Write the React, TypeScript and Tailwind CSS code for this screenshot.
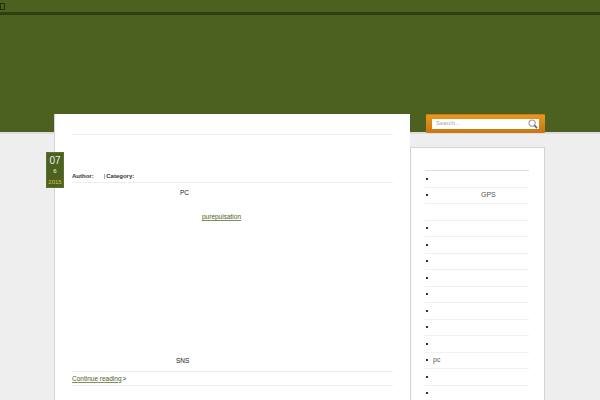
const items = [
  { t: "", b: true },
  { t: "GPS", b: true, c: true },
  { t: "", b: false },
  ...Array.from({ length: 8 }, () => ({ t: "", b: true })),
  { t: "pc", b: true },
  { t: "", b: true },
  { t: "", b: true },
];

function Search() {
  return (
    <svg width="10" height="10" viewBox="0 0 11 11" fill="none" className="shrink-0">
      <circle cx="4.5" cy="4.5" r="3.4" stroke="#999" strokeWidth="1.2" />
      <path d="M7 7l3 3" stroke="#666" strokeWidth="1.8" />
    </svg>
  );
}

export default function App() {
  return (
    <div className="relative h-[400px] w-[600px] overflow-hidden bg-[#eeeeee] font-['Liberation_Sans',sans-serif] text-[6.5px] text-[#333]">
      <header className="h-[134px] border-b-2 border-[#dcdcdc] bg-[#4c6120]">
        <div className="h-[15px] border-b-[3px] border-[#2f3f12] pt-[3px]">
          <div className="h-[7px] w-[5px] border border-[#22300a]" />
        </div>
      </header>
      <div className="absolute left-[54px] right-[55px] top-[114px] flex items-start justify-between">
        <main className="h-[286px] w-[356px] border-l border-[#d4d4d4] bg-white px-[17px]">
          <div className="mt-[20px] h-px bg-[#eee]" />
          <div className="mt-[37px] flex h-[11px] items-center border-b border-[#eee] pb-[1px] text-[6px] font-bold">
            <span>Author:</span><span className="ml-[10px] font-normal">|</span><span className="ml-[1px]">Category:</span>
          </div>
          <p className="ml-[108px] mt-[5px] leading-[9px] text-[#222]">PC</p>
          <a className="ml-[130px] mt-[15px] block leading-[9px] text-[#4c6120] underline decoration-[#7f8f5f]">purepulsation</a>
          <p className="ml-[104px] mt-[135px] leading-[9px] text-[#222]">SNS</p>
          <div className="mt-[6px] flex h-[15px] items-center border-y border-[#eee]">
            <a className="text-[#4c6120] underline decoration-[#7f8f5f]">Continue reading</a><span className="ml-[1px]">&gt;</span>
          </div>
        </main>
        <aside className="flex w-[135px] flex-col">
          <div className="ml-[16px] flex h-[19px] items-center rounded-[1px] border-y border-[#c77c18] bg-gradient-to-b from-[#e8981f] to-[#c9770f] px-[6px]">
            <div className="flex h-[10px] w-full items-center justify-between bg-white pl-[4px] pr-[1px] text-[6px] text-[#aaa]">
              <span>Search...</span><Search />
            </div>
          </div>
          <div className="mt-[14px] h-[260px] border border-[#d4d4d4] bg-white pl-[14px] pr-[15px] pt-[22px]">
            <ul className="border-t border-[#ddd]">
              {items.map((it, i) => (
                <li key={i} className="flex h-[16.5px] items-center border-b border-[#f0f0f0] text-[7px] text-[#555]">
                  {it.b && <span className="ml-[1px] h-[2px] w-[2px] shrink-0 bg-[#333]" />}
                  <span className={it.c ? "ml-[53px]" : "ml-[5px]"}>{it.t}</span>
                </li>
              ))}
            </ul>
          </div>
        </aside>
      </div>
      <div className="absolute left-[46px] top-[152px] flex h-[36px] w-[18px] flex-col items-center border border-[#5d7230] bg-[#4c6120] text-[#eee]">
        <span className="mt-[2px] text-[10px] leading-[12px]">07</span>
        <span className="text-[6px] leading-[9px]">6</span>
        <span className="mt-[2px] text-[6px] leading-[8px] text-[#d9c24f]">2015</span>
      </div>
    </div>
  );
}
